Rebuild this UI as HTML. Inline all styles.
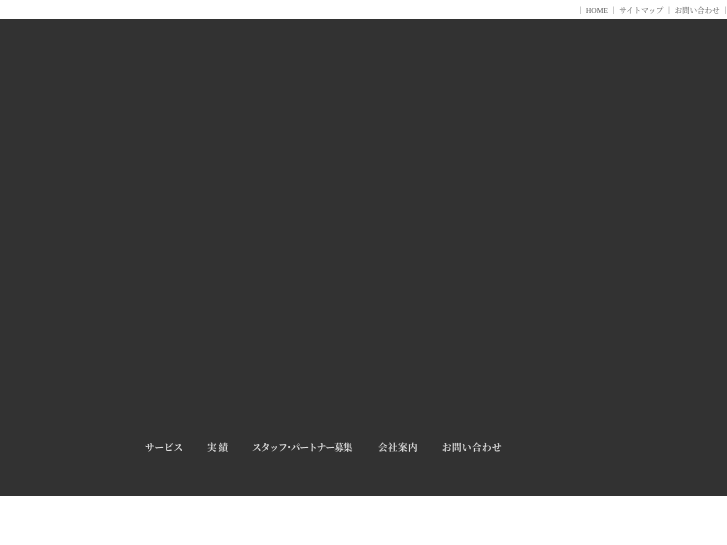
<!DOCTYPE html>
<html><head><meta charset="utf-8"><style>
html,body{margin:0;padding:0;width:727px;height:545px;background:#fff;overflow:hidden;font-family:"Liberation Serif","Noto Serif CJK SC",serif;}
.top{position:absolute;top:0;left:0;width:727px;height:19px;}
.top span{position:absolute;top:5px;right:-2px;font-size:7.5px;color:#555;white-space:nowrap;letter-spacing:0;}
.hero{position:absolute;top:19px;left:0;width:727px;height:477px;background:#323232;}
.nav{position:absolute;top:440px;left:0;font-size:9.5px;color:#ddd;font-weight:bold;white-space:nowrap;}
.nav span{position:absolute;letter-spacing:0.3px;}
</style></head><body>
<div class="top"><span>｜ HOME ｜ サイトマップ ｜ お問い合わせ ｜</span></div>
<div class="hero"></div>
<div class="nav">
<span style="left:145px;letter-spacing:0">サービス</span>
<span style="left:207px;letter-spacing:2px">実績</span>
<span style="left:252px;letter-spacing:-0.8px">スタッフ･パートナー募集</span>
<span style="left:378px;letter-spacing:0.5px">会社案内</span>
<span style="left:442px;letter-spacing:0.5px">お問い合わせ</span>
</div>
</body></html>
